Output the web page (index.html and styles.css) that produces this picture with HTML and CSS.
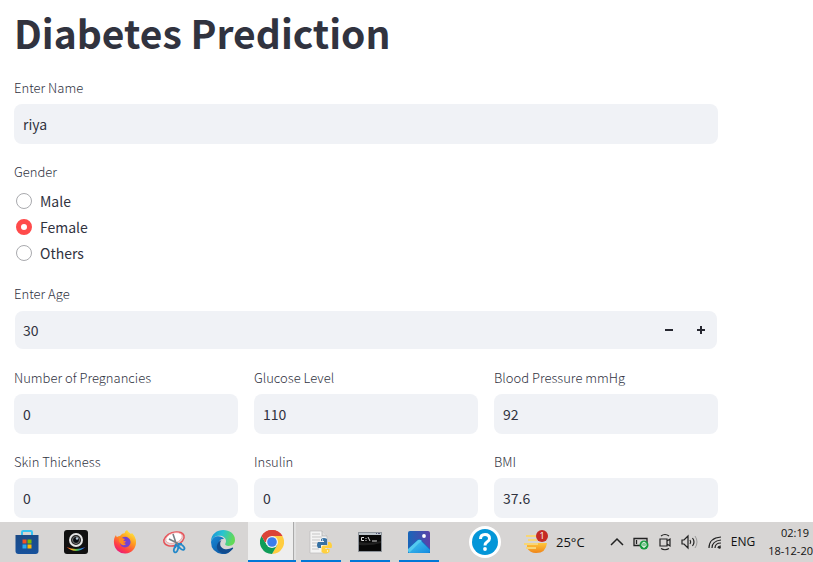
FILE: index.html
```html
<!DOCTYPE html>
<html lang="en">
<head>
<meta charset="utf-8">
<title>Diabetes Prediction</title>
<link rel="stylesheet" href="styles.css">
</head>
<body>
<main class="page">
  <h1 class="title">Diabetes Prediction</h1>
  <form class="form">
    <div class="field">
      <label class="label" for="name">Enter Name</label>
      <input class="input" id="name" type="text" value="riya">
    </div>
    <fieldset class="field group">
      <legend class="label">Gender</legend>
      <label class="option"><input class="radio" type="radio" name="gender">Male</label>
      <label class="option"><input class="radio" type="radio" name="gender" checked>Female</label>
      <label class="option"><input class="radio" type="radio" name="gender">Others</label>
    </fieldset>
    <div class="field">
      <label class="label" for="age">Enter Age</label>
      <div class="stepper">
        <input class="stepper-input" id="age" type="number" value="30">
        <button class="step" type="button" aria-label="Decrease age"><svg width="8" height="8" viewBox="0 0 8 8"><path d="M0 3h8v2H0z"/></svg></button>
        <button class="step" type="button" aria-label="Increase age"><svg width="8" height="8" viewBox="0 0 8 8"><path d="M0 3h3V0h2v3h3v2H5v3H3V5H0z"/></svg></button>
      </div>
    </div>
    <div class="columns">
      <div class="field"><label class="label" for="pregnancies">Number of Pregnancies</label><input class="input" id="pregnancies" type="text" value="0"></div>
      <div class="field"><label class="label" for="glucose">Glucose Level</label><input class="input" id="glucose" type="text" value="110"></div>
      <div class="field"><label class="label" for="pressure">Blood Pressure mmHg</label><input class="input" id="pressure" type="text" value="92"></div>
      <div class="field"><label class="label" for="skin">Skin Thickness</label><input class="input" id="skin" type="text" value="0"></div>
      <div class="field"><label class="label" for="insulin">Insulin</label><input class="input" id="insulin" type="text" value="0"></div>
      <div class="field"><label class="label" for="bmi">BMI</label><input class="input" id="bmi" type="text" value="37.6"></div>
    </div>
  </form>
</main>
<footer class="taskbar">
  <div class="apps">
    <button class="app" aria-label="Store">
      <svg width="24" height="24" viewBox="0 0 24 24"><defs><linearGradient id="store" x2="0" y2="1"><stop stop-color="#1b4a86"/><stop offset="1" stop-color="#17529c"/></linearGradient></defs><path d="M7 5V2.2Q7 1 8.200 1h7.600Q17 1 17 2.200V5" fill="none" stroke="#35c3f3" stroke-width="2"/><path d="M.5 5h23v16q0 3-3 3h-17q-3 0-3-3z" fill="url(#store)"/><path fill="#f25022" d="M7.500 9.500h4v4h-4z"/><path fill="#7fba00" d="M12.500 9.500h4v4h-4z"/><path fill="#27a8f0" d="M7.500 14.500h4v4h-4z"/><path fill="#ffb900" d="M12.500 14.500h4v4h-4z"/></svg>
    </button>
    <button class="app" aria-label="Camera">
      <svg width="24" height="24" viewBox="0 0 24 24"><defs><linearGradient id="rainbow"><stop stop-color="#e5372b"/><stop offset=".3" stop-color="#f6b72b"/><stop offset=".55" stop-color="#49b94d"/><stop offset=".8" stop-color="#268bea"/><stop offset="1" stop-color="#5935b5"/></linearGradient></defs><rect width="24" height="24" rx="3" fill="#101010"/><circle cx="12" cy="10" r="6" fill="#222" stroke="#e4e4e4" stroke-width="2"/><circle cx="12" cy="10" r="3.500" fill="#090d12" stroke="#777"/><circle cx="13" cy="8.500" r="1.200" fill="#b7c8d6"/><path d="M2.500 17q9.500 4 19 0Q12 25 2.500 17z" fill="url(#rainbow)"/></svg>
    </button>
    <button class="app" aria-label="Firefox">
      <svg width="24" height="24" viewBox="0 0 24 24"><defs><linearGradient id="fox" x1=".8" y1="0" x2=".2" y2="1"><stop stop-color="#fff044"/><stop offset=".4" stop-color="#ff9a1f"/><stop offset=".75" stop-color="#ff3d47"/><stop offset="1" stop-color="#e31587"/></linearGradient></defs><path d="M3 5q0 1 .8 2L7 6q2-3 5-3-1-1 2-3 1 2 4 4l1-1q4 4 4 9a11 11 0 0 1-22 1Q.500 8 3 5z" fill="url(#fox)"/><path d="M8 9q2-3 6-2 4 2 3.500 6-1 4-5.500 4.500Q7.500 17 7 13l4 .5 2-2-3-1z" fill="#7542d1"/><path d="M3.800 7.500Q7 5.500 9 8l3 1-2 2v2l3 1q-3 3-6-1-2-2-1-5z" fill="#ff8a20"/></svg>
    </button>
    <button class="app" aria-label="Snipping Tool">
      <svg width="26" height="24" viewBox="0 0 26 24"><ellipse cx="13" cy="9" rx="10.500" ry="6.500" transform="rotate(-18 13 9)" fill="#dadada" stroke="#e65359" stroke-width="1.500"/><ellipse cx="13" cy="8" rx="8.500" ry="5" transform="rotate(-18 13 8)" fill="#fff" stroke="#ef9497" stroke-width=".7"/><path d="M12 4l4 12M8 9l12 6" stroke="#777e85" stroke-width="1.600"/><path d="M15 14l-1 4M17 14l4 0" stroke="#2388c9" stroke-width="2"/><ellipse cx="15" cy="19" rx="1.900" ry="3.500" transform="rotate(18 15 19)" fill="none" stroke="#2388c9" stroke-width="1.800"/><ellipse cx="20.500" cy="17" rx="1.900" ry="3.500" transform="rotate(-48 20.500 17)" fill="none" stroke="#2388c9" stroke-width="1.800"/></svg>
    </button>
    <button class="app" aria-label="Edge">
      <svg width="24" height="24" viewBox="0 0 24 24"><defs><linearGradient id="edge" x2="1" y2=".25"><stop stop-color="#168ed9"/><stop offset=".5" stop-color="#29c3d1"/><stop offset="1" stop-color="#62d957"/></linearGradient><linearGradient id="wave" x2="1" y2="1"><stop stop-color="#1689d8"/><stop offset="1" stop-color="#0c4a93"/></linearGradient></defs><path d="M0 12C0-4 24-3 24 10c0 6-7 7-9.500 5-1-1 .5-1.500.5-4 0-6-12-8-15 1z" fill="url(#edge)"/><path d="M0 12C2 5 10 5 13 9 7 8 6 16 11 20q5 4 10-1-4 6-10 5Q0 22 0 12z" fill="url(#wave)"/><path d="M10.500 10C6 17 14 22 21.500 17.500q1 0 .5 1.200C14 28 2 21 7 13q1-2 3.500-3z" fill="#114b8d"/></svg>
    </button>
    <button class="app active" aria-label="Chrome">
      <svg width="24" height="24" viewBox="0 0 24 24"><path d="M12 12 1.600 6A12 12 0 0 1 22.400 6z" fill="#db4437"/><path d="M12 12V6h10.400A12 12 0 0 1 12 24l5.200-9z" fill="#ffcd40"/><path d="M12 12l5.200 3L12 24A12 12 0 0 1 1.600 6l5.200 9z" fill="#0f9d58"/><path d="M1.600 6A12 12 0 0 1 22.400 6H12v6H5z" fill="#db4437"/><circle cx="12" cy="12" r="6" fill="#f4f4f4"/><circle cx="12" cy="12" r="4.800" fill="#3b7ded"/></svg>
    </button>
    <button class="app running" aria-label="Python">
      <svg width="24" height="24" viewBox="0 0 24 24"><path d="M1 1h12l5 5v17H1z" fill="#f4f4f4" stroke="#bbb" stroke-width=".7"/><path d="M13 1v5h5" fill="#ddd" stroke="#aaa" stroke-width=".7"/><path d="M3 4h8M3 7h10M3 10h8M3 13h6M3 16h6M3 19h7" stroke="#c5c5c5"/><path d="M12 9q3-2 6 0v6h-6v3h-3q-2-3 0-6h6v-1h-3z" fill="#3672a4"/><path d="M19 12h2q3 2 1.500 6h-6v1h4v3q-4 3-8 0v-5l1.500-1.500H19z" fill="#ffd03e"/><circle cx="13.500" cy="10" r=".7" fill="#fff"/><circle cx="18.500" cy="21" r=".7" fill="#fff"/></svg>
    </button>
    <button class="app running" aria-label="Command Prompt">
      <svg width="24" height="20" viewBox="0 0 24 20"><path d="M.5.5h23v19H.5z" fill="#080808" stroke="#8c9299"/><path d="M1 1h22v2H1z" fill="#bcc4ca"/><path d="M18 1.500h1M20 1.500h2" stroke="#557"/><path d="M6 5.500H3.500v3H6M8 6v1M8 8v1M10 5l2 4M14 9h5" fill="none" stroke="#ddd"/><path d="M1 10Q12 12 23 9v2q-10 3-22 2z" fill="#202020"/></svg>
    </button>
    <button class="app running" aria-label="Photos">
      <svg width="22" height="22" viewBox="0 0 22 22"><defs><linearGradient id="photo" x2="1"><stop stop-color="#1766b9"/><stop offset="1" stop-color="#5c41a8"/></linearGradient><linearGradient id="hill" x2="1" y2="1"><stop stop-color="#48c9ed"/><stop offset="1" stop-color="#148ae0"/></linearGradient></defs><rect width="22" height="22" rx="2" fill="url(#photo)"/><path d="M0 18l9-9q2-2 4 0l9 9v4H0z" fill="#126fc4"/><path d="M1 20l9-9q2-2 4 0l8 8v1q0 2-2 2H2q-1 0-1-2z" fill="url(#hill)"/><path d="M1 22l10-10 3-2Q12 8 10 9L0 18v2z" fill="#54c9ef"/><circle cx="16" cy="5" r="1.900" fill="#fff"/></svg>
    </button>
  </div>
  <button class="help" aria-label="Help">
    <svg width="32" height="32" viewBox="0 0 32 32"><circle cx="16" cy="16" r="16" fill="#fff"/><circle cx="16" cy="16" r="13" fill="#0496d8"/><path d="M11.500 13q0-4.500 4.500-4.500t4.500 4q0 2-2.500 3.500-2 1.300-2 3.500" fill="none" stroke="#fff" stroke-width="3"/><circle cx="16" cy="23" r="1.900" fill="#fff"/></svg>
  </button>
  <button class="weather">
    <svg width="24" height="24" viewBox="0 0 24 24"><defs><linearGradient id="sun" x2="0" y2="1"><stop stop-color="#ffc83c"/><stop offset="1" stop-color="#ef8418"/></linearGradient></defs><path d="M3 13h20q-1 10-11 10-6 0-9-5z" fill="url(#sun)"/><path d="M2 6h10M4 10h9M0 14h14M2 18h10" stroke="#f7d677" stroke-width="2"/><circle cx="18" cy="6" r="6" fill="#c42b25"/><text class="badge" x="18" y="9" text-anchor="middle">1</text></svg>
    <span>25°C</span>
  </button>
  <div class="tray">
    <svg width="14" height="16" viewBox="0 0 14 16"><path d="M1 11l6-6 6 6" fill="none" stroke="#222" stroke-width="1.500"/></svg>
    <svg width="16" height="16" viewBox="0 0 16 16"><path d="M1 4.500h13v7H1zM3.500 6v4" fill="none" stroke="#222" stroke-width="1.300"/><circle cx="11" cy="11" r="4.500" fill="#169b3d"/><path d="M11 14v-5M9 12V9.500L11 8l2 1.500V12l-2 1z" fill="none" stroke="#fff" stroke-width=".9"/></svg>
    <svg width="14" height="18" viewBox="0 0 14 18"><path d="M2 6h7v7H2zM9 8l3-2v7l-3-2M3 3q4-3 8 0M3 15.500q4 2.500 8 0" fill="none" stroke="#222" stroke-width="1.200"/></svg>
    <svg width="18" height="16" viewBox="0 0 18 16"><path d="M1 6h2l4-4v12l-4-4H1zM9 6q1.500 2 0 4M11.500 4q3 4 0 8" fill="none" stroke="#222" stroke-width="1.200"/><path d="M14 2q4 6 0 12" fill="none" stroke="#999"/></svg>
    <svg width="14" height="16" viewBox="0 0 14 16"><path d="M1 14Q1 4 13 3M4 14Q4 7 13 6M7 14Q7 9 13 9M10 14q0-2 3-2" fill="none" stroke="#222" stroke-width="1.200"/><circle cx="11.500" cy="13.500" r="1.300" fill="#222"/></svg>
    <span>ENG</span>
  </div>
  <div class="clock"><span class="time">02:19</span><span>18-12-20</span></div>
</footer>
</body>
</html>
```
FILE: styles.css
```css
* { box-sizing: border-box; }
body {
  margin: 0;
  height: 100vh;
  display: flex;
  flex-direction: column;
  overflow: hidden;
  background: #fff;
  color: #31333f;
  font: 14px/24px "Noto Sans CJK SC", sans-serif;
}
button, input { font: inherit; color: inherit; }
button { padding: 0; border: 0; background: none; }
svg { display: block; flex: none; }
.page { flex: 1; min-height: 0; padding: 0 95px 0 14px; overflow: hidden; }
.title { margin: 0; height: 76px; font-size: 39px; font-weight: 700; line-height: 64px; }
.form { display: flex; flex-direction: column; gap: 16px; }
.field { min-width: 0; }
.group { margin: 0; padding: 0; border: 0; }
.label { display: block; padding: 0; margin-bottom: 4px; font-size: 13px; font-weight: 300; line-height: 24px; }
.input { display: block; width: 100%; height: 40px; padding: 0 9px; border: 0; border-radius: 8px; background: #f0f2f6; }
.option { display: flex; align-items: center; gap: 8px; height: 26px; padding-left: 2px; }
.radio { appearance: none; width: 16px; height: 16px; margin: 0; border: 1px solid #a9aaae; border-radius: 50%; background: #fff; }
.radio:checked { border: 5px solid #ff4b4b; }
.stepper { display: flex; height: 40px; border: 1px solid transparent; border-radius: 9px; background: #f0f2f6 padding-box; padding-left: 8px; }
.stepper-input { flex: 1; min-width: 0; padding: 0; border: 0; background: none; appearance: textfield; }
.stepper-input::-webkit-inner-spin-button { appearance: none; margin: 0; }
.step { display: grid; place-items: center; width: 32px; fill: #262730; }
.columns { display: grid; grid-template-columns: repeat(3, 1fr); gap: 16px; }
.taskbar {
  display: flex;
  align-items: center;
  height: 40px;
  flex: none;
  background: #d7d5d4;
  color: #111;
  font: 12px/18px "Open Sans", sans-serif;
}
.apps { display: flex; gap: 1px; height: 100%; padding-left: 3px; }
.app { display: grid; place-items: center; width: 48px; }
.active { background: linear-gradient(#0078d7, #0078d7) bottom / 100% 2px no-repeat, linear-gradient(90deg, #eee 45px, #aaa 45px 46px, #e0e0e0 46px); }
.running { background: linear-gradient(#0078d7, #0078d7) bottom / 40px 2px no-repeat; }
.help { margin-left: 26px; }
.weather { display: flex; align-items: center; gap: 8px; margin-left: 23px; font-size: 13px; }
.badge { font-size: 9px; fill: #fff; }
.tray { display: flex; align-items: center; gap: 9px; margin-left: auto; }
.clock { display: flex; flex-direction: column; align-items: flex-end; margin-left: 13px; font-size: 11px; }
.time { padding-right: 4px; }
```
